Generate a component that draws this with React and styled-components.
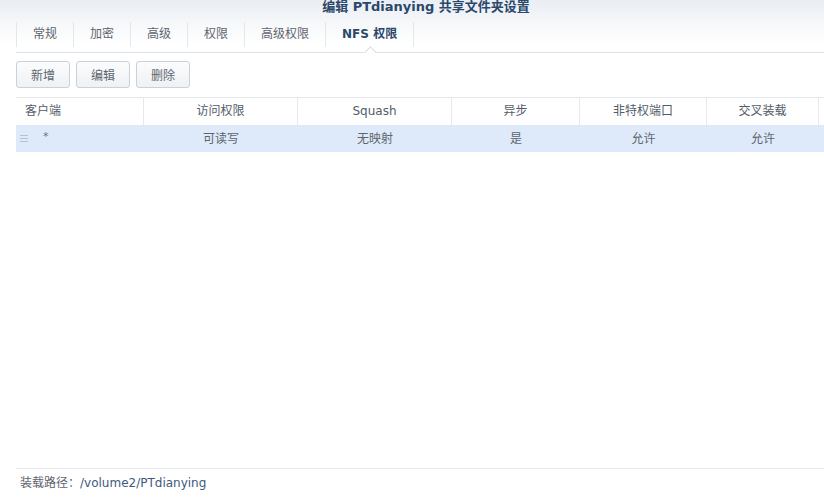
import React from "react";
import styled, { createGlobalStyle, css } from "styled-components";

const Global = createGlobalStyle`
  html, body { margin: 0; padding: 0; background: #fff; }
  body { font-family: "DejaVu Sans", "Noto Sans CJK SC", sans-serif; font-size: 12px; color: #555; }
  * { box-sizing: border-box; }
`;

const Window = styled.div`
  width: 824px;
  height: 504px;
  display: flex;
  flex-direction: column;
  overflow: hidden;
  background: linear-gradient(to bottom, #e9eef4 0px, #f6f8fa 24px, #ffffff 44px);
`;

const Title = styled.div`
  height: 14px;
  padding-top: 1px;
  line-height: 11px;
  text-align: center;
  font-size: 13px;
  font-weight: bold;
  color: #2b4769;
  padding-left: 28px;
  font-family: "DejaVu Sans", "Noto Sans CJK SC", sans-serif;
`;

const TabList = styled.div`
  display: flex;
  align-items: flex-start;
  margin: 8px 0 0 16px;
  padding-bottom: 5px;
  border-bottom: 1px solid #dde2e8;
`;

const Tab = styled.div`
  position: relative;
  height: 25px;
  line-height: 25px;
  padding: 0 16px;
  border-right: 1px solid #e3e7ec;
  ${(p) => p.$first && css`border-left: 1px solid #e3e7ec;`}
  color: ${(p) => (p.$active ? "#2b4769" : "#5e656e")};
  font-weight: ${(p) => (p.$active ? "bold" : "normal")};
  white-space: nowrap;
  ${(p) =>
    p.$active &&
    css`
      &::after {
        content: "";
        position: absolute;
        left: 50%;
        bottom: -10px;
        width: 8px;
        height: 8px;
        margin-left: -4px;
        background: #fff;
        border-left: 1px solid #d6dce3;
        border-top: 1px solid #d6dce3;
        transform: rotate(45deg);
      }
    `}
`;

const Toolbar = styled.div`
  display: flex;
  gap: 6px;
  margin: 8px 0 0 16px;
`;

const Button = styled.button`
  height: 27px;
  width: 54px;
  padding: 0;
  border: 1px solid #c9d1da;
  border-radius: 3px;
  background: linear-gradient(to bottom, #fbfcfd, #eef1f5);
  color: #5e656e;
  font-family: "Noto Sans CJK SC", sans-serif;
  font-size: 12px;
`;

const Table = styled.div`
  margin: 9px 0 0 16px;
  border-top: 1px solid #e3e7ec;
  width: 900px;
`;

const Row = styled.div`
  display: grid;
  grid-template-columns: 128px 154px 154px 128px 127px 112px 97px;
  height: 27px;
  background: ${(p) => (p.$selected ? "#deeaf9" : "transparent")};
`;

const HeadCell = styled.div`
  line-height: 26px;
  text-align: ${(p) => (p.$left ? "left" : "center")};
  padding-left: ${(p) => (p.$left ? "9px" : "0")};
  border-right: 1px solid #e6e9ed;
  color: #525d6a;
  white-space: nowrap;
`;

const Cell = styled.div`
  display: flex;
  align-items: center;
  justify-content: ${(p) => (p.$left ? "flex-start" : "center")};
  padding-left: ${(p) => (p.$left ? "4px" : "0")};
  padding-bottom: 2px;
  color: #5e656e;
  white-space: nowrap;
`;

const Handle = styled.span`
  display: inline-flex;
  flex-direction: column;
  gap: 2px;
  width: 8px;
  margin-right: 15px;
  margin-top: 2px;
  & > i {
    display: block;
    height: 1px;
    background: #b9c2cc;
  }
`;

const Star = styled.span`
  color: #6a7280;
  font-size: 11px;
  margin-top: -3px;
`;

const Spacer = styled.div`
  flex: 1;
`;

const Footer = styled.div`
  margin-left: 16px;
  border-top: 1px solid #e6e9ed;
  height: 36px;
  padding: 7px 0 0 4px;
  line-height: 14px;
  color: #5e656e;
`;

const Path = styled.span`
  color: #3d5a7d;
`;

const tabs = ["常规", "加密", "高级", "权限", "高级权限", "NFS 权限"];
const headers = ["客户端", "访问权限", "Squash", "异步", "非特权端口", "交叉装载", ""];
const row = ["可读写", "无映射", "是", "允许", "允许", ""];

export default function App() {
  return (
    <>
      <Global />
      <Window>
        <Title>编辑 PTdianying 共享文件夹设置</Title>
        <TabList>
          {tabs.map((t, i) => (
            <Tab key={t} $first={i === 0} $active={i === tabs.length - 1}>
              {t}
            </Tab>
          ))}
        </TabList>
        <Toolbar>
          <Button>新增</Button>
          <Button>编辑</Button>
          <Button>删除</Button>
        </Toolbar>
        <Table>
          <Row>
            {headers.map((h, i) => (
              <HeadCell key={i} $left={i === 0}>
                {h}
              </HeadCell>
            ))}
          </Row>
          <Row $selected>
            <Cell $left>
              <Handle>
                <i />
                <i />
                <i />
              </Handle>
              <Star>*</Star>
            </Cell>
            {row.map((c, i) => (
              <Cell key={i}>{c}</Cell>
            ))}
          </Row>
        </Table>
        <Spacer />
        <Footer>
          装载路径：<Path>/volume2/PTdianying</Path>
        </Footer>
      </Window>
    </>
  );
}
